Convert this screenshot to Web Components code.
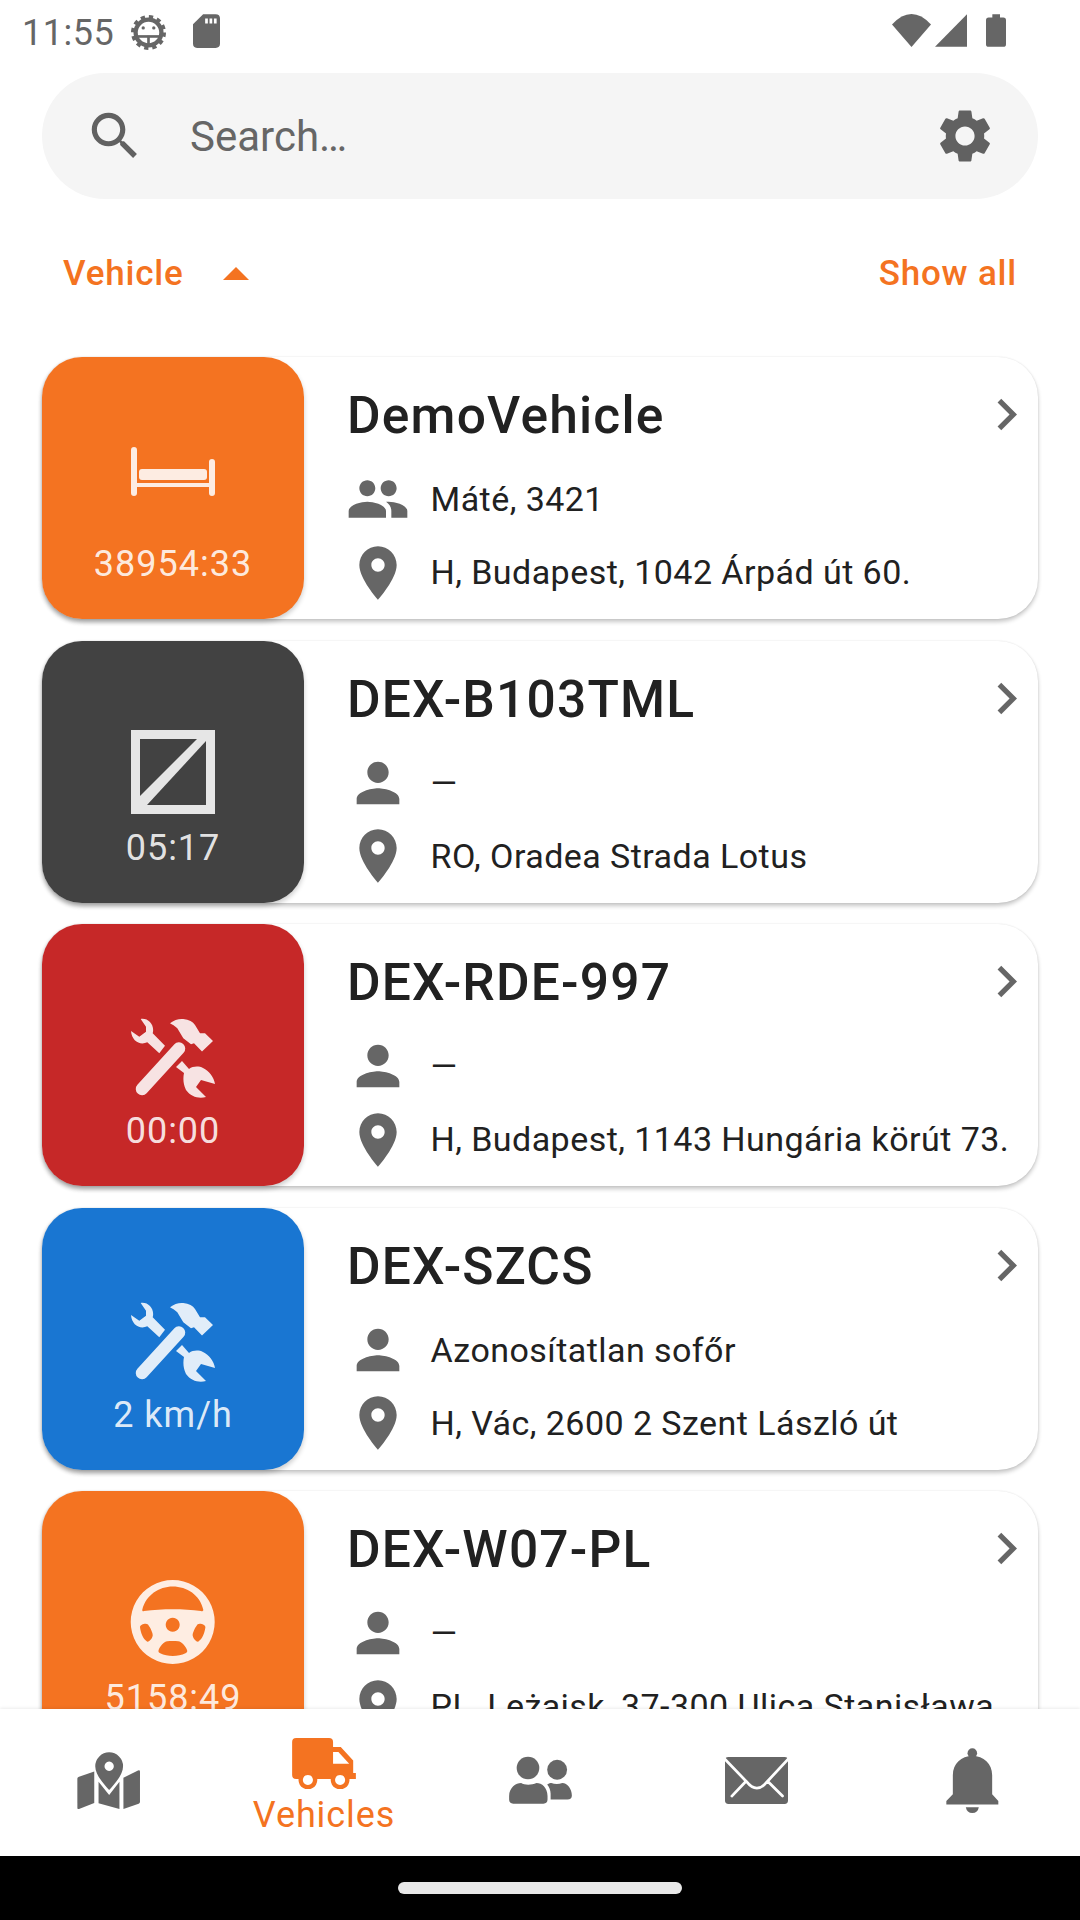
<!DOCTYPE html>
<html lang="hu">
<head>
<meta charset="utf-8">
<title>Vehicles</title>
<style>
  html, body { margin: 0; padding: 0; background: #fff; }
  body {
    width: 1080px; height: 1920px; overflow: hidden;
    display: flex; flex-direction: column;
    font-family: Roboto, "Noto Sans", sans-serif;
  }
</style>
</head>
<body>
<status-bar></status-bar>
<search-bar></search-bar>
<list-header></list-header>
<vehicle-list>
  <vehicle-card color="#F47321" icon="bed" driver-icon="people">
    <span slot="name">DemoVehicle</span><span slot="label">38954:33</span>
    <span slot="driver">Máté, 3421</span><span slot="address">H, Budapest, 1042 Árpád út 60.</span>
  </vehicle-card>
  <vehicle-card color="#424242" icon="off" driver-icon="person">
    <span slot="name">DEX-B103TML</span><span slot="label">05:17</span>
    <span slot="driver">—</span><span slot="address">RO, Oradea Strada Lotus</span>
  </vehicle-card>
  <vehicle-card color="#C62828" icon="tools" driver-icon="person">
    <span slot="name">DEX-RDE-997</span><span slot="label">00:00</span>
    <span slot="driver">—</span><span slot="address">H, Budapest, 1143 Hungária körút 73.</span>
  </vehicle-card>
  <vehicle-card color="#1976D2" icon="tools" driver-icon="person">
    <span slot="name">DEX-SZCS</span><span slot="label">2 km/h</span>
    <span slot="driver">Azonosítatlan sofőr</span><span slot="address">H, Vác, 2600 2 Szent László út</span>
  </vehicle-card>
  <vehicle-card color="#F47321" icon="wheel" driver-icon="person">
    <span slot="name">DEX-W07-PL</span><span slot="label">5158:49</span>
    <span slot="driver">—</span><span slot="address">PL, Leżajsk, 37-300 Ulica Stanisława</span>
  </vehicle-card>
</vehicle-list>
<bottom-nav></bottom-nav>
<home-bar></home-bar>

<script>
// material-style glyphs on a 24 box
const GLYPHS = {
  search: 'M15.5 14h-.79l-.28-.27C15.41 12.59 16 11.11 16 9.5 16 5.91 13.09 3 9.5 3S3 5.91 3 9.5 5.91 16 9.5 16c1.61 0 3.09-.59 4.23-1.57l.27.28v.79l5 4.99L20.49 19l-4.99-5zm-6 0C7.01 14 5 11.99 5 9.5S7.01 5 9.5 5 14 7.01 14 9.5 11.99 14 9.5 14z',
  settings: 'M19.14,12.94c0.04-0.3,0.06-0.61,0.06-0.94c0-0.32-0.02-0.64-0.07-0.94l2.03-1.58c0.18-0.14,0.23-0.41,0.12-0.61l-1.92-3.32c-0.12-0.22-0.37-0.29-0.59-0.22l-2.39,0.96c-0.5-0.38-1.03-0.7-1.62-0.94L14.4,2.81c-0.04-0.24-0.24-0.41-0.48-0.41h-3.84c-0.24,0-0.43,0.17-0.47,0.41L9.25,5.35C8.66,5.59,8.12,5.92,7.63,6.29L5.24,5.33c-0.22-0.08-0.47,0-0.59,0.22L2.74,8.87C2.62,9.08,2.66,9.34,2.86,9.48l2.03,1.58C4.84,11.36,4.8,11.69,4.8,12s0.02,0.64,0.07,0.94l-2.03,1.58c-0.18,0.14-0.23,0.41-0.12,0.61l1.92,3.32c0.12,0.22,0.37,0.29,0.59,0.22l2.39-0.96c0.5,0.38,1.03,0.7,1.62,0.94l0.36,2.54c0.05,0.24,0.24,0.41,0.48,0.41h3.84c0.24,0,0.44-0.17,0.47-0.41l0.36-2.54c0.59-0.24,1.13-0.56,1.62-0.94l2.39,0.96c0.22,0.08,0.47,0,0.59-0.22l1.92-3.32c0.12-0.22,0.07-0.47-0.12-0.61L19.14,12.94z M12,15.6c-1.98,0-3.6-1.62-3.6-3.6s1.62-3.6,3.6-3.6s3.6,1.62,3.6,3.6S13.98,15.6,12,15.6z',
  people: 'M16 11c1.66 0 2.99-1.34 2.99-3S17.66 5 16 5c-1.66 0-3 1.34-3 3s1.34 3 3 3zm-8 0c1.66 0 2.99-1.34 2.99-3S9.66 5 8 5C6.34 5 5 6.34 5 8s1.34 3 3 3zm0 2c-2.33 0-7 1.17-7 3.5V19h14v-2.5c0-2.33-4.67-3.5-7-3.5zm8 0c-.29 0-.62.02-.97.05 1.16.84 1.97 1.97 1.97 3.45V19h6v-2.5c0-2.33-4.67-3.5-7-3.5z',
  person: 'M12 12c2.21 0 4-1.79 4-4s-1.79-4-4-4-4 1.79-4 4 1.79 4 4 4zm0 2c-2.67 0-8 1.34-8 4v2h16v-2c0-2.66-5.33-4-8-4z',
  place: 'M12 2C8.13 2 5 5.13 5 9c0 5.25 7 13 7 13s7-7.75 7-13c0-3.87-3.13-7-7-7zm0 9.5c-1.38 0-2.5-1.12-2.5-2.5s1.12-2.5 2.5-2.5 2.5 1.12 2.5 2.5-1.12 2.5-2.5 2.5z',
  chevron: 'M10 6L8.59 7.41 13.17 12l-4.58 4.59L10 18l6-6z'
};

const glyph = (name, size, color) =>
  `<svg width="${size}" height="${size}" viewBox="0 0 24 24" fill="${color}" style="display:block;flex:none"><path d="${GLYPHS[name]}"/></svg>`;

// tile icons, drawn on an 84 box
const TILE_ICONS = {
  bed: `<path d="M3 1a3 3 0 0 1 3 3v33h72V16a3 3 0 0 1 6 0v31a3 3 0 0 1-6 0v-6H6v6a3 3 0 0 1-6 0V4a3 3 0 0 1 3-3z"/><rect x="8" y="23" width="68" height="11" rx="3"/>`,
  off: `<path fill-rule="evenodd" d="M0 0h84v84H0zM9 9v66h66V9z"/><path d="M9 66L66 9h9v2L16 75H9z"/>`,
  tools: `<path d="M11 76L48 35.500" fill="none" stroke="#fff" stroke-width="12.500" stroke-linecap="round"/>
    <path d="M39 10.300C43 7 48 5.500 52.300 6C58 6.500 62 8.500 64 12L69 20.300H74L82 28L71 38.500L63 30.300L60 31.300L52.300 25.300L46.300 15.300C44 13 41 11.500 39 10.300Z"/>
    <path d="M9.700 6C17.300 4.700 24 12 21.700 20.300L34 32.700L28.300 40.300L16.300 29.300C9 32.700 .7 28 0 18L8.300 23.700L15 18.700V13.700Z"/>
    <path d="M45 54L51 48L58 56C62 53 68 53 72 55C78 58 83 64 84 71L70 67L65 74L75 84C68 86 60 84 55 77C52 71 52 65 53 60Z"/>`,
  wheel: `<path fill-rule="evenodd" d="M41.700 0a42 42 0 1 0 .01 0zM11.300 29.700C15 15 28 6.500 41.700 6.500C56 6.500 69 15 72.300 29.700C72.500 31 71 31.500 70 31C52 28.500 32 28.500 13 31C12 31.500 11 31 11.300 29.700ZM41.700 37.700a7 7 0 1 1-.01 0zM9 47C9 44.500 15 42.500 17 44.500C19.500 48 22 53 21.700 55.700C21 59 17.500 62.500 16 61.500C12 59 9.500 52 9 47ZM74.400 47C74.400 44.500 68.400 42.500 66.400 44.500C63.900 48 61.400 53 61.700 55.700C62.400 59 65.900 62.500 67.400 61.500C71.400 59 73.900 52 74.400 47ZM27.500 70.500C28.500 67 33 61.500 36.300 61.300C39 61 44 61 47.300 61.300C50.500 61.500 55.200 67 56.200 70.500C56.500 72 55.500 72.700 54.500 73.200C47 76.800 36.500 76.800 29.200 73.200C28 72.700 27.200 72 27.500 70.500Z"/>`
};

class StatusBar extends HTMLElement {
  constructor() {
    super();
    this.attachShadow({ mode: 'open' });
    this.shadowRoot.innerHTML = `
      <style>
        :host {
          display: flex; flex: none; height: 73px; box-sizing: border-box;
          padding: 14px 74px 0 22px; color: #666; fill: #666;
        }
        .time { font: 400 36px/38px Roboto, sans-serif; letter-spacing: .5px; width: 109px; }
        svg { display: block; flex: none; }
        .sd { margin-left: 27px; }
        .wifi { margin-left: auto; }
        .signal { margin-left: 4px; }
        .battery { margin-left: 19px; }
      </style>
      <span class="time">11:55</span>
      <svg width="35" height="37" viewBox="362 25 106 110">
        <circle cx="415" cy="80" r="39" fill="none" stroke="#666" stroke-width="13"/>
        <circle cx="415" cy="80" r="48" fill="none" stroke="#666" stroke-width="10" stroke-dasharray="13 12.1"/>
        <rect x="378" y="88" width="74" height="8"/>
        <rect x="411" y="90" width="8" height="30"/>
        <circle cx="399" cy="66" r="5"/><circle cx="431" cy="66" r="5"/>
      </svg>
      <svg class="sd" width="27" height="34" viewBox="548 30 80 100">
        <path d="M578 30H615Q628 30 628 43V118Q628 130 615 130H560Q548 130 548 118V60Z"/>
        <path fill="#fff" d="M584 43h8v15h-8zM597 43h8v15h-8zM610 43h8v15h-8z"/>
      </svg>
      <svg class="wifi" width="39" height="33" viewBox="37 27 116 98"><path d="M37 58Q95 -4 153 58L95 125Z"/></svg>
      <svg class="signal" width="32" height="33" viewBox="165 28 95 97"><path d="M165 125L260 28V125Z"/></svg>
      <svg class="battery" width="20" height="33" viewBox="318 27 60 98"><path d="M337 27H360V37H370Q378 37 378 45V117Q378 125 370 125H326Q318 125 318 117V45Q318 37 326 37H337Z"/></svg>
    `;
  }
}

class SearchBar extends HTMLElement {
  constructor() {
    super();
    this.attachShadow({ mode: 'open' });
    this.shadowRoot.innerHTML = `
      <style>
        :host {
          display: flex; flex: none; align-items: center; height: 126px;
          margin: 0 42px; padding: 0 41px 0 42px; box-sizing: border-box;
          background: #F5F5F5; border-radius: 63px;
        }
        span { margin-left: 44px; flex: 1; font: 400 42px Roboto, sans-serif; color: #666; }
      </style>
      ${glyph('search', 62, '#616161')}
      <span>Search…</span>
      ${glyph('settings', 64, '#616161')}
    `;
  }
}

class ListHeader extends HTMLElement {
  constructor() {
    super();
    this.attachShadow({ mode: 'open' });
    this.shadowRoot.innerHTML = `
      <style>
        :host {
          display: flex; flex: none; align-items: center; height: 148px;
          padding: 0 63px 0 63px; box-sizing: border-box;
          font: 500 35px Roboto, sans-serif; letter-spacing: .8px; color: #F47321;
        }
        svg { margin-left: 39px; display: block; }
        .all { margin-left: auto; }
      </style>
      <span>Vehicle</span>
      <svg width="26" height="13" viewBox="0 0 26 13"><path fill="#F47321" d="M13 0L26 13H0z"/></svg>
      <span class="all">Show all</span>
    `;
  }
}

class VehicleList extends HTMLElement {
  constructor() {
    super();
    this.attachShadow({ mode: 'open' });
    this.shadowRoot.innerHTML = `
      <style>
        :host {
          display: flex; flex-direction: column; flex: 1; min-height: 0; overflow: hidden;
          padding: 10px 42px 0; gap: 21.6px; box-sizing: border-box;
        }
      </style>
      <slot></slot>
    `;
  }
}

class VehicleCard extends HTMLElement {
  constructor() {
    super();
    this.attachShadow({ mode: 'open' });
  }

  connectedCallback() {
    const color = this.getAttribute('color');
    const icon = TILE_ICONS[this.getAttribute('icon')];
    const driverIcon = this.getAttribute('driver-icon');
    this.shadowRoot.innerHTML = `
      <style>
        :host {
          display: flex; flex: none; height: 262px; background: #fff; border-radius: 40px;
          box-shadow: 0 3px 4px rgba(0,0,0,.22), 0 0 2px rgba(0,0,0,.1);
        }
        .tile {
          flex: none; width: 262px; height: 262px; box-sizing: border-box; padding-top: 89px;
          display: flex; flex-direction: column; align-items: center;
          background: ${color}; border-radius: 40px;
          box-shadow: 0 3px 5px rgba(0,0,0,.2);
          color: rgba(255,255,255,.87);
        }
        .tile svg { display: block; flex: none; overflow: visible; fill: #fff; opacity: .87; }
        .label { margin-top: 15px; font: 400 36px/38px Roboto, sans-serif; letter-spacing: 1px; white-space: nowrap; }
        .body { flex: 1; min-width: 0; padding: 26px 0 0 42px; color: #212121; }
        .title { display: flex; align-items: center; justify-content: space-between; height: 63px; }
        .name { font: 500 51.500px/66px Roboto, sans-serif; letter-spacing: 1.200px; margin: 3px 0 0 1px; }
        .row { display: flex; align-items: center; height: 74px; }
        .row + .row { height: 73px; }
        .rows { margin-top: 16px; }
        .text { margin-left: 20.500px; font: 400 34px Roboto, sans-serif; letter-spacing: .45px; white-space: nowrap; }
        .row + .row .text { margin-top: -1px; }
      </style>
      <div class="tile">
        <svg width="84" height="84" viewBox="0 0 84 84">${icon}</svg>
        <span class="label"><slot name="label"></slot></span>
      </div>
      <div class="body">
        <div class="title"><span class="name"><slot name="name"></slot></span>${glyph('chevron', 63, '#666')}</div>
        <div class="rows">
          <div class="row">${glyph(driverIcon, 64, '#666')}<span class="text"><slot name="driver"></slot></span></div>
          <div class="row">${glyph('place', 64, '#666')}<span class="text"><slot name="address"></slot></span></div>
        </div>
      </div>
    `;
  }
}

class BottomNav extends HTMLElement {
  constructor() {
    super();
    this.attachShadow({ mode: 'open' });
    this.shadowRoot.innerHTML = `
      <style>
        :host {
          display: grid; grid-template-columns: repeat(5, 1fr); flex: none; height: 147px;
          background: #fff; box-shadow: 0 -1px 3px rgba(0,0,0,.08); position: relative;
        }
        .item { display: flex; flex-direction: column; align-items: center; justify-content: center; fill: #666; padding-bottom: 5px; }
        .item.on { color: #F47321; fill: #F47321; justify-content: flex-start; padding: 29px 0 0; }
        svg { display: block; }
        span { font: 400 36px/40px Roboto, sans-serif; letter-spacing: .9px; margin-top: 6px; }
      </style>
      <div class="item">
        <svg width="63" height="57" viewBox="50 80 190 172">
          <path fill-rule="evenodd" d="M147 81a42 42 0 0 1 42 42C189 150 160 180 147 195C134 180 105 150 105 123A42 42 0 0 1 147 81ZM147 109a14 14 0 1 0 .01 0Z"/>
          <path d="M56 155L102 139V234L56 252Q51 253 51 248V161Q51 157 56 155Z"/>
          <path d="M115 170L147 210L178 170V252L115 235Z"/>
          <path d="M190 158L234 136Q240 134 240 139V230Q240 234 236 236L190 252Z"/>
        </svg>
      </div>
      <div class="item on">
        <svg width="64" height="51" viewBox="700 38 190 152">
          <path d="M712 38H810Q822 38 822 50V65H845L882 105V142H890V160H867A24 24 0 0 0 820 160H771A24 24 0 0 0 723 160H712Q700 160 700 148V50Q700 38 712 38Z"/>
          <path fill="#fff" d="M822 80H838L870 115H822Z"/>
          <path fill-rule="evenodd" d="M747 135a28 28 0 1 0 .01 0ZM747 148a15 15 0 1 1-.01 0ZM843 135a28 28 0 1 0 .01 0ZM843 148a15 15 0 1 1-.01 0Z"/>
        </svg>
        <span>Vehicles</span>
      </div>
      <div class="item">
        <svg width="63" height="48" viewBox="55 98 183 140">
          <circle cx="110" cy="133" r="33"/>
          <path d="M55 215C55 190 75 177 90 177C100 183 120 183 135 177C150 177 167 190 167 215V225Q167 237 155 237H67Q55 237 55 225Z"/>
          <circle cx="195" cy="138" r="29"/>
          <path d="M166 181C172 178 175 177 178 177C188 181 200 181 210 177C225 177 238 195 238 213Q238 225 225 225H176V208C176 198 172 188 166 181Z"/>
        </svg>
      </div>
      <div class="item">
        <svg width="63" height="47" viewBox="682 98 184 137">
          <rect x="682" y="98" width="184" height="137" rx="10"/>
          <path d="M678 100L745 170Q775 208 805 170L870 100M702 212L742 170M850 212L808 170" fill="none" stroke="#fff" stroke-width="8" stroke-linecap="round"/>
        </svg>
      </div>
      <div class="item">
        <svg width="53" height="65" viewBox="1325 70 155 190">
          <circle cx="1402" cy="85" r="14"/>
          <path d="M1345 205V150C1345 115 1370 95 1402 92C1435 95 1460 115 1460 150V205L1478 225V235H1326V225Z"/>
          <path d="M1383 243H1421Q1418 260 1402 260Q1386 260 1383 243Z"/>
        </svg>
      </div>
    `;
  }
}

class HomeBar extends HTMLElement {
  constructor() {
    super();
    this.attachShadow({ mode: 'open' });
    this.shadowRoot.innerHTML = `
      <style>
        :host { display: flex; flex: none; height: 64px; background: #000; justify-content: center; align-items: flex-start; }
        div { width: 284px; height: 12px; margin-top: 26px; border-radius: 6px; background: #E8E8E8; }
      </style>
      <div></div>
    `;
  }
}

customElements.define('status-bar', StatusBar);
customElements.define('search-bar', SearchBar);
customElements.define('list-header', ListHeader);
customElements.define('vehicle-list', VehicleList);
customElements.define('vehicle-card', VehicleCard);
customElements.define('bottom-nav', BottomNav);
customElements.define('home-bar', HomeBar);
</script>
</body>
</html>
